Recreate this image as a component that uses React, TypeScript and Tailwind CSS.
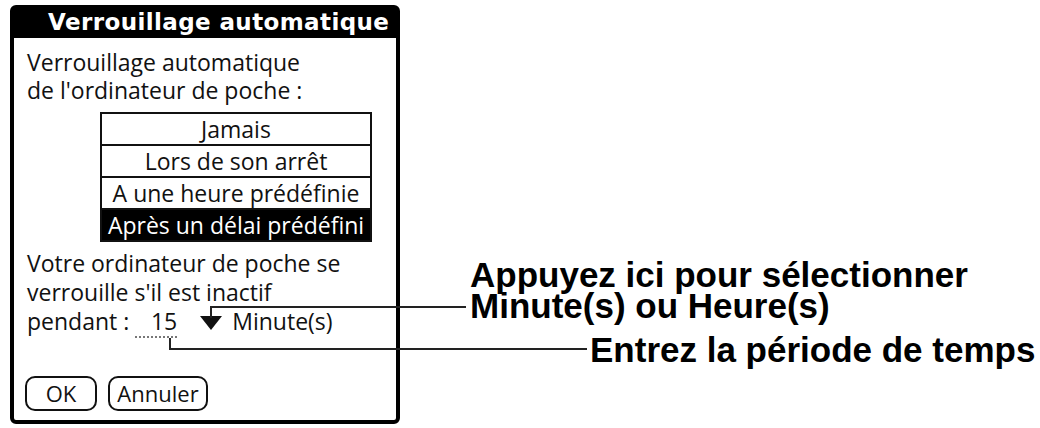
import React from "react";

const body = { fontFamily: '"Open Sans", "DejaVu Sans", sans-serif' };
const title = { fontFamily: '"DejaVu Sans", "Open Sans", sans-serif' };
const note = { fontFamily: '"Liberation Sans", Arial, sans-serif' };

export default function App() {
  return (
    <div className="relative w-[1040px] h-[428px] bg-white overflow-hidden flex text-[#111]">
      {/* Dialog */}
      <div className="ml-[10px] mt-[5px] w-[390px] h-[419px] border-4 border-black rounded-[6px] flex flex-col shrink-0">
        <div
          className="h-[29px] bg-black text-white font-bold text-[23px] leading-[27px] tracking-[0.4px] pl-[34px] whitespace-nowrap"
          style={title}
        >
          Verrouillage automatique
        </div>
        <div className="flex flex-col pl-[13px] pt-[10px] text-[23px] leading-[28px] whitespace-nowrap" style={body}>
          <div>Verrouillage automatique</div>
          <div>de l'ordinateur de poche :</div>
          <div className="ml-[73px] mt-[8px] w-[272px] border-2 border-[#111] flex flex-col text-center leading-[30px]">
            <div className="h-[32px] border-b-2 border-[#111]">Jamais</div>
            <div className="h-[32px] border-b-2 border-[#111]">Lors de son arrêt</div>
            <div className="h-[32px] border-b-2 border-[#111]">A une heure prédéfinie</div>
            <div className="h-[30px] bg-black text-white">Après un délai prédéfini</div>
          </div>
          <div className="mt-[7px] leading-[29px]">Votre ordinateur de poche se</div>
          <div className="leading-[29px]">verrouille s'il est inactif</div>
          <div className="flex items-baseline leading-[29px]">
            <span>pendant :</span>
            <span className="ml-[6px] w-[42px] text-right border-b-2 border-dotted border-[#777] leading-[26px] pb-[2px]">15</span>
            <svg className="ml-[23px] -mb-[2px]" width="22" height="14" viewBox="0 0 22 14">
              <polygon points="0,0 22,0 11,14" fill="#111" />
            </svg>
            <span className="ml-[10px]">Minute(s)</span>
          </div>
        </div>
        <div className="mt-auto mb-[9px] flex gap-[11px] pl-[11px] text-[22px]" style={body}>
          <div className="w-[72px] h-[35px] border-2 border-[#111] rounded-[10px] flex items-center justify-center">OK</div>
          <div className="w-[100px] h-[35px] border-2 border-[#111] rounded-[10px] flex items-center justify-center">Annuler</div>
        </div>
      </div>

      {/* Annotations */}
      <div className="flex flex-col font-bold text-[35px] leading-[31px] text-black whitespace-nowrap" style={note}>
        <div className="ml-[70px] mt-[259px]">
          <div>Appuyez ici pour sélectionner</div>
          <div>Minute(s) ou Heure(s)</div>
        </div>
        <div className="ml-[190px] mt-[13px]">Entrez la période de temps</div>
      </div>

      {/* Callout lines */}
      <svg className="absolute inset-0 pointer-events-none" width="1040" height="428">
        <polyline points="211,318 211,307 466,307" fill="none" stroke="#222" strokeWidth="2" />
        <polyline points="170,338 170,349 587,349" fill="none" stroke="#222" strokeWidth="2" />
      </svg>
    </div>
  );
}
